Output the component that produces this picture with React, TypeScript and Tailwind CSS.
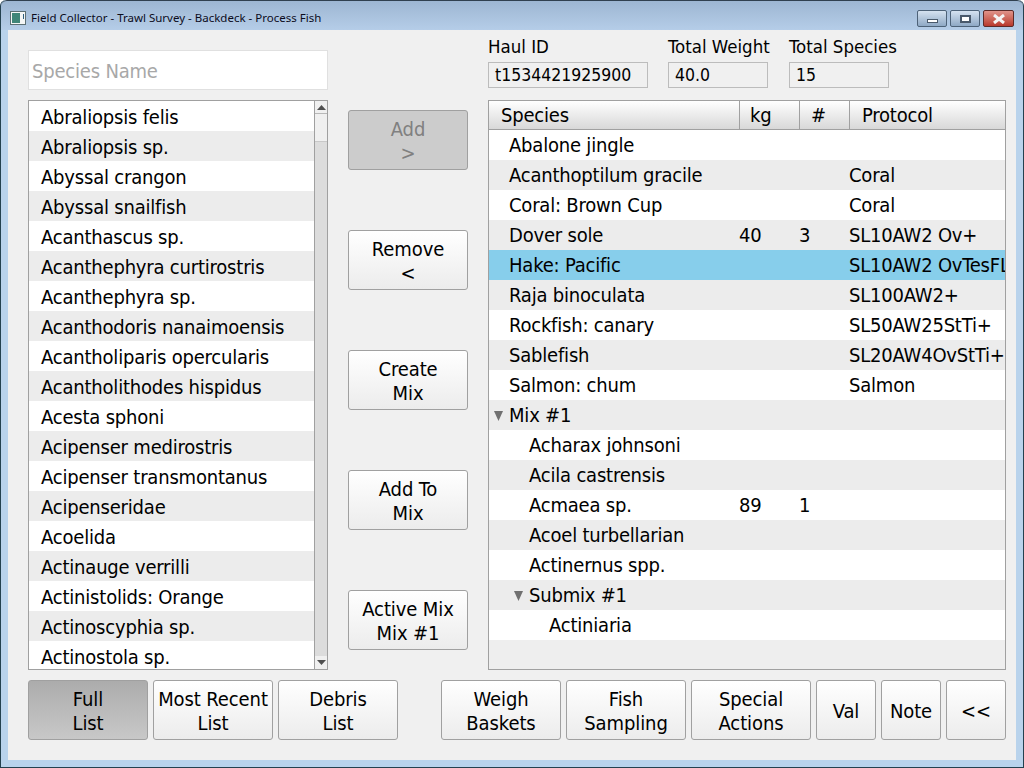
import React from 'react';

const speciesList = [
  'Abraliopsis felis', 'Abraliopsis sp.', 'Abyssal crangon', 'Abyssal snailfish', 'Acanthascus sp.',
  'Acanthephyra curtirostris', 'Acanthephyra sp.', 'Acanthodoris nanaimoensis', 'Acantholiparis opercularis',
  'Acantholithodes hispidus', 'Acesta sphoni', 'Acipenser medirostris', 'Acipenser transmontanus',
  'Acipenseridae', 'Acoelida', 'Actinauge verrilli', 'Actinistolids: Orange', 'Actinoscyphia sp.', 'Actinostola sp.',
];

interface TreeRow {
  name: string;
  kg?: string;
  count?: string;
  protocol?: string;
  level?: number;
  open?: boolean;
  selected?: boolean;
}

const treeRows: TreeRow[] = [
  { name: 'Abalone jingle' },
  { name: 'Acanthoptilum gracile', protocol: 'Coral' },
  { name: 'Coral: Brown Cup', protocol: 'Coral' },
  { name: 'Dover sole', kg: '40', count: '3', protocol: 'SL10AW2 Ov+' },
  { name: 'Hake: Pacific', protocol: 'SL10AW2 OvTesFL+', selected: true },
  { name: 'Raja binoculata', protocol: 'SL100AW2+' },
  { name: 'Rockfish: canary', protocol: 'SL50AW25StTi+' },
  { name: 'Sablefish', protocol: 'SL20AW4OvStTi+' },
  { name: 'Salmon: chum', protocol: 'Salmon' },
  { name: 'Mix #1', open: true },
  { name: 'Acharax johnsoni', level: 1 },
  { name: 'Acila castrensis', level: 1 },
  { name: 'Acmaea sp.', kg: '89', count: '1', level: 1 },
  { name: 'Acoel turbellarian', level: 1 },
  { name: 'Actinernus spp.', level: 1 },
  { name: 'Submix #1', level: 1, open: true },
  { name: 'Actiniaria', level: 2 },
];

const ActionButton = ({ lines, className = 'w-[120px]', active = false, disabled = false }: { lines: string[]; className?: string; active?: boolean; disabled?: boolean }) => (
  <button
    className={`h-[60px] shrink-0 whitespace-nowrap rounded-[3px] border border-[#a0a0a0] pt-[2px] leading-6 tracking-[-0.1px] ${className} ${
      disabled
        ? 'bg-[#cccccc] text-[#808080]'
        : active
          ? 'bg-gradient-to-b from-[#acacac] to-[#c8c8c8] border-[#8c8c8c] text-black'
          : 'bg-gradient-to-b from-white to-[#ececec] text-black'
    }`}
  >
    {lines.map((l) => (
      <div key={l}>{l}</div>
    ))}
  </button>
);

const InfoField = ({ label, value, className }: { label: string; value: string; className: string }) => (
  <div className={className}>
    <div className="h-[26px] whitespace-nowrap text-[18.5px] leading-[22px] tracking-normal">{label}</div>
    <div className="h-[26px] border border-[#bcbcbc] pl-[6px] text-[17.5px] leading-[24px] tracking-normal">{value}</div>
  </div>
);

const HeaderCell = ({ children, className }: { children: React.ReactNode; className: string }) => (
  <div className={`h-full border-r border-[#a0a0a0] bg-gradient-to-b from-white to-[#d8d8d8] leading-[28px] ${className}`}>{children}</div>
);

const Arrow = ({ up }: { up: boolean }) => (
  <svg width="9" height="5" viewBox="0 0 9 5">
    <path d={up ? 'M4.5 0 L9 5 L0 5 Z' : 'M0 0 L9 0 L4.5 5 Z'} fill="#505050" />
  </svg>
);

export default function App() {
  return (
    <div className="flex h-[768px] w-[1024px] flex-col overflow-hidden rounded-t-[6px] border-x border-b border-[#24414f] bg-[#b9d3ec] font-['DejaVu_Sans_Condensed','DejaVu_Sans',sans-serif] font-stretch-condensed text-[20px] tracking-[-0.2px] text-black">
      {/* Title bar */}
      <div className="flex h-[30px] shrink-0 items-center rounded-t-[6px] border-t border-[#30404f] bg-gradient-to-b from-[#9db6d2] to-[#b5cde8] pl-[9px] pr-[9px] pt-[4px]">
        <svg width="16" height="14" viewBox="0 0 16 14" className="shrink-0">
          <rect x="0.5" y="0.5" width="15" height="13" fill="#f4f6f6" stroke="#5c6f74" />
          <rect x="2" y="2" width="8" height="10" fill="#3f8578" />
          <rect x="13" y="3" width="1" height="5" fill="#2f5f7f" />
        </svg>
        <span className="ml-[5px] font-['Noto_Sans',sans-serif] text-[11.5px] font-normal tracking-normal text-[#0c0c1c]">Field Collector - Trawl Survey - Backdeck - Process Fish</span>
        <div className="ml-auto flex gap-[3px] self-start pt-[5px]">
          <div className="flex h-[17px] w-[30px] items-end justify-center rounded-[2px] border border-[#4d6278] bg-gradient-to-b from-[#d5e2f0] to-[#8fa9c5] pb-[3px]">
            <div className="h-[4px] w-[11px] border border-[#49596b] bg-white" />
          </div>
          <div className="flex h-[17px] w-[30px] items-center justify-center rounded-[2px] border border-[#4d6278] bg-gradient-to-b from-[#d5e2f0] to-[#8fa9c5]">
            <div className="h-[8px] w-[11px] border-2 border-[#49596b] bg-white" />
          </div>
          <div className="flex h-[17px] w-[31px] items-center justify-center rounded-[2px] border border-[#5c2a28] bg-gradient-to-b from-[#e0938a] to-[#b8372c]">
            <svg width="14" height="10" viewBox="0 0 14 10">
              <path d="M2 1 L12 9 M12 1 L2 9" stroke="#f4f4f4" strokeWidth="3" />
            </svg>
          </div>
        </div>
      </div>

      {/* Client area */}
      <div className="mx-[7px] flex h-[730px] flex-col bg-[#f0f0f0] pl-[20px] pr-[10px] pt-[20px]">
        <div className="flex h-[620px] gap-[20px]">
          {/* Left column */}
          <div className="flex w-[300px] shrink-0 flex-col gap-[10px]">
            <div className="h-[40px] border border-[#e0e0e0] bg-white pl-[3px] leading-[40px] text-[#a8a8a8]">Species Name</div>
            <div className="flex h-[570px] border border-[#a0a0a0] bg-white">
              <div className="min-w-0 flex-1 overflow-hidden">
                {speciesList.map((s, i) => (
                  <div key={s} className={`h-[30px] pl-[12px] leading-[32px] ${i % 2 ? 'bg-[#ececec]' : 'bg-white'}`}>
                    {s}
                  </div>
                ))}
              </div>
              <div className="flex w-[13px] shrink-0 flex-col border-l border-[#a0a0a0] bg-[#dcdcdc]">
                <div className="flex h-[13px] items-center justify-center border-b border-[#b8b8b8] bg-[#f0f0f0]">
                  <Arrow up />
                </div>
                <div className="h-[28px] border-b border-[#c8c8c8] bg-[#f0f0f0]" />
                <div className="flex-1" />
                <div className="flex h-[13px] items-center justify-center bg-[#f0f0f0]">
                  <Arrow up={false} />
                </div>
              </div>
            </div>
          </div>

          {/* Middle buttons */}
          <div className="flex w-[120px] shrink-0 flex-col gap-[60px] pt-[60px]">
            <ActionButton lines={['Add', '>']} disabled />
            <ActionButton lines={['Remove', '<']} />
            <ActionButton lines={['Create', 'Mix']} />
            <ActionButton lines={['Add To', 'Mix']} />
            <ActionButton lines={['Active Mix', 'Mix #1']} />
          </div>

          {/* Right column */}
          <div className="flex w-[518px] shrink-0 flex-col gap-[12px]">
            <div className="-mt-[14px] flex h-[52px]">
              <InfoField label="Haul ID" value="t1534421925900" className="w-[160px]" />
              <InfoField label="Total Weight" value="40.0" className="ml-[20px] w-[100px]" />
              <InfoField label="Total Species" value="15" className="ml-[21px] w-[100px]" />
            </div>
            <div className="h-[570px] overflow-hidden border border-[#a0a0a0] bg-[#eeeeee]">
              <div className="flex h-[29px] border-b border-[#a0a0a0]">
                <HeaderCell className="w-[251px] pl-[12px]">Species</HeaderCell>
                <HeaderCell className="w-[60px] pl-[10px]">kg</HeaderCell>
                <HeaderCell className="w-[50px] pl-[11px]">#</HeaderCell>
                <HeaderCell className="flex-1 border-r-0 pl-[12px]">Protocol</HeaderCell>
              </div>
              {treeRows.map((r, i) => {
                const level = r.level ?? 0;
                const bg = r.selected ? 'bg-[#87ceeb]' : i % 2 ? 'bg-[#ececec]' : 'bg-white';
                return (
                  <div key={r.name} className={`flex h-[30px] leading-[30px] ${bg}`}>
                    <div className="relative w-[250px] whitespace-nowrap">
                      <span className={level === 0 ? 'ml-[20px]' : level === 1 ? 'ml-[40px]' : 'ml-[60px]'}>{r.name}</span>
                      {r.open && (
                        <svg width="10" height="10" viewBox="0 0 10 10" className={`absolute top-[11px] ${level === 0 ? 'left-[5px]' : 'left-[25px]'}`}>
                          <path d="M0 0 L9 0 L4.5 10 Z" fill="#707070" />
                        </svg>
                      )}
                    </div>
                    <div className="w-[60px]">{r.kg}</div>
                    <div className="w-[50px]">{r.count}</div>
                    <div className="min-w-0 flex-1 overflow-hidden whitespace-nowrap">{r.protocol}</div>
                  </div>
                );
              })}
            </div>
          </div>
        </div>

        {/* Bottom buttons */}
        <div className="mt-[10px] flex">
          <div className="flex gap-[5px]">
            <ActionButton lines={['Full', 'List']} active />
            <ActionButton lines={['Most Recent', 'List']} />
            <ActionButton lines={['Debris', 'List']} />
          </div>
          <div className="ml-[43px] flex gap-[5px]">
            <ActionButton lines={['Weigh', 'Baskets']} />
            <ActionButton lines={['Fish', 'Sampling']} />
            <ActionButton lines={['Special', 'Actions']} />
            <ActionButton lines={['Val']} className="w-[60px]" />
            <ActionButton lines={['Note']} className="w-[60px]" />
            <ActionButton lines={['<<']} className="w-[60px]" />
          </div>
        </div>
      </div>
    </div>
  );
}
